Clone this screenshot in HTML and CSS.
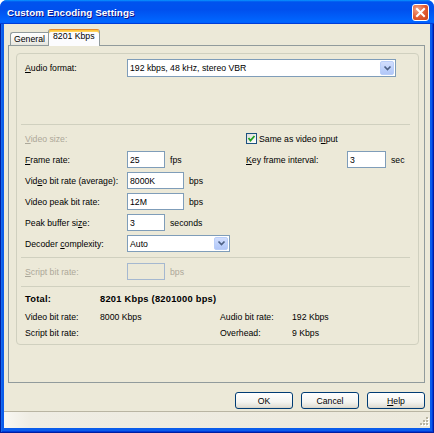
FILE: index.html
```html
<!DOCTYPE html>
<html>
<head>
<meta charset="utf-8">
<link rel="stylesheet" href="styles.css">
</head>
<body>
<div class="win">
  <div class="titlebar">
    <span class="title">Custom Encoding Settings</span>
    <span class="close"><svg width="15" height="15" viewBox="0 0 15 15"><path d="M4 4 L11 11 M11 4 L4 11" stroke="#fff" stroke-width="2" stroke-linecap="square"/></svg></span>
  </div>
  <div class="frame">
    <div class="client">
      <div class="tabs">
        <div class="tab">General</div>
        <div class="tab active">8201 Kbps</div>
      </div>
      <div class="panel">
        <div class="group">
          <div class="audio">
            <div class="arow">
              <span class="lbl"><u>A</u>udio format:</span>
              <div class="combo wide"><span>192 kbps, 48 kHz, stereo VBR</span><span class="dd"><svg width="11" height="11" viewBox="0 0 11 11"><path d="M2.5 3.5 L5.5 6.5 L8.5 3.5" fill="none" stroke="#4D6185" stroke-width="1.7"/></svg></span></div>
            </div>
          </div>
          <div class="sep"></div>
          <div class="video">
            <div class="vcol left">
              <div class="row"><span class="lbl dis"><u>V</u>ideo size:</span></div>
              <div class="row"><span class="lbl"><u>F</u>rame rate:</span><span class="tb s">25</span><span class="unit">fps</span></div>
              <div class="row"><span class="lbl">Vid<u>e</u>o bit rate (average):</span><span class="tb m">8000K</span><span class="unit">bps</span></div>
              <div class="row"><span class="lbl">Video peak bit rate:</span><span class="tb m">12M</span><span class="unit">bps</span></div>
              <div class="row"><span class="lbl">Peak buffer si<u>z</u>e:</span><span class="tb s">3</span><span class="unit">seconds</span></div>
              <div class="row"><span class="lbl">Decoder <u>c</u>omplexity:</span><div class="combo dec"><span>Auto</span><span class="dd"><svg width="11" height="11" viewBox="0 0 11 11"><path d="M2.5 3.5 L5.5 6.5 L8.5 3.5" fill="none" stroke="#4D6185" stroke-width="1.7"/></svg></span></div></div>
            </div>
            <div class="vcol right">
              <div class="row"><span class="cb"><svg width="9" height="9" viewBox="0 0 9 9"><path d="M1.5 4 L3.5 6.5 L7.5 2" fill="none" stroke="#21A121" stroke-width="1.8"/></svg></span><span class="cbl">Same as video i<u>n</u>put</span></div>
              <div class="row"><span class="lbl2"><u>K</u>ey frame interval:</span><span class="tb k">3</span><span class="unit">sec</span></div>
            </div>
          </div>
          <div class="sep"></div>
          <div class="script">
            <span class="lbl dis"><u>S</u>cript bit rate:</span><span class="tb s disabled"></span><span class="unit dis">bps</span>
          </div>
          <div class="sep"></div>
          <div class="totals">
            <div class="trow bold"><span class="c1">Total:</span><span>8201 Kbps (8201000 bps)</span></div>
            <div class="trow gap"><span class="c1">Video bit rate:</span><span class="c2">8000 Kbps</span><span class="c3">Audio bit rate:</span><span>192 Kbps</span></div>
            <div class="trow"><span class="c1">Script bit rate:</span><span class="c2"></span><span class="c3">Overhead:</span><span>9 Kbps</span></div>
          </div>
        </div>
      </div>
      <div class="buttons">
        <div class="btn">OK</div>
        <div class="btn">Cancel</div>
        <div class="btn"><span><u>H</u>elp</span></div>
      </div>
      <div class="status">
        <svg class="grip" width="10" height="10" viewBox="0 0 10 10">
          <rect x="8" y="1" width="2" height="2" fill="#fff"/><rect x="7" y="0" width="2" height="2" fill="#B8B4A2"/>
          <rect x="5" y="4" width="2" height="2" fill="#fff"/><rect x="4" y="3" width="2" height="2" fill="#B8B4A2"/>
          <rect x="8" y="4" width="2" height="2" fill="#fff"/><rect x="7" y="3" width="2" height="2" fill="#B8B4A2"/>
          <rect x="2" y="7" width="2" height="2" fill="#fff"/><rect x="1" y="6" width="2" height="2" fill="#B8B4A2"/>
          <rect x="5" y="7" width="2" height="2" fill="#fff"/><rect x="4" y="6" width="2" height="2" fill="#B8B4A2"/>
          <rect x="8" y="7" width="2" height="2" fill="#fff"/><rect x="7" y="6" width="2" height="2" fill="#B8B4A2"/>
        </svg>
      </div>
    </div>
  </div>
</div>
</body>
</html>
```
FILE: styles.css
```css
html, body {
  margin: 0;
  padding: 0;
  background: #ffffff;
}
body {
  font-family: "Liberation Sans", Arial, sans-serif;
  font-size: 8.7px;
  color: #000;
}
.win {
  width: 434px;
  height: 433px;
  display: flex;
  flex-direction: column;
  background: #0055EA;
  border-radius: 7px 7px 0 0;
  overflow: hidden;
}
.titlebar {
  height: 24px;
  flex: none;
  box-sizing: border-box;
  display: flex;
  align-items: center;
  justify-content: space-between;
  padding: 0 5px 0 7px;
  background: linear-gradient(180deg, #0997ff, #0053ee 8%, #0050ee 40%, #0066ff 88%, #0066ff 93%, #005bff 95%, #003dd7 96%, #003dd7);
}
.title {
  color: #fff;
  font-weight: bold;
  font-size: 9.8px;
  text-shadow: 1px 1px #0F1089;
  letter-spacing: 0.1px;
}
.close {
  box-sizing: border-box;
  width: 17px;
  height: 17px;
  border: 1px solid #fff;
  border-radius: 3px;
  background: radial-gradient(circle at 30% 30%, #F4A68A, #E0582E 55%, #C9431C);
  display: flex;
  align-items: center;
  justify-content: center;
  margin-top: 1px;
}
.frame {
  flex: 1;
  display: flex;
  padding: 0 4px 5px 4px;
  background: #0a5ceb;
  box-shadow: inset 1px 0 #001EA0, inset -1px 0 #001EA0, inset 0 -1px #001EA0, inset 2px 0 #166AEE, inset -2px 0 #003BDA, inset 0 -2px #003BDA;
}
.client {
  flex: 1;
  background: #ECE9D8;
  display: flex;
  flex-direction: column;
}
.tabs {
  display: flex;
  align-items: flex-end;
  height: 16px;
  margin-top: 5px;
  padding-left: 6px;
  flex: none;
}
.tab {
  box-sizing: border-box;
  height: 13px;
  width: 38px;
  border: 1px solid #919B9C;
  border-bottom: none;
  border-right: none;
  border-radius: 3px 0 0 0;
  background: linear-gradient(#FFFFFF, #F3F3EF 60%, #E6E5DE);
  padding-left: 3px;
  line-height: 12px;
}
.tab.active {
  height: 17px;
  width: 52px;
  margin-bottom: -1px;
  position: relative;
  z-index: 1;
  background: #FCFCFE;
  border: 1px solid #919B9C;
  border-top: 1px solid #E68B2C;
  border-bottom: none;
  border-radius: 3px 3px 0 0;
  box-shadow: inset 0 1px #FFC73C, inset 0 2px #FFD35C;
  padding-left: 4px;
  line-height: 13px;
}
.panel {
  box-sizing: border-box;
  margin-left: 4px;
  width: 417px;
  height: 338px;
  flex: none;
  border: 1px solid #919B9C;
  background: #ECE9D8;
  padding: 7px 0 0 7px;
}
.group {
  box-sizing: border-box;
  width: 403px;
  height: 292px;
  border: 1px solid #D0D0BF;
  border-radius: 4px;
  display: flex;
  flex-direction: column;
}
.audio {
  height: 70px;
  box-sizing: border-box;
  padding: 5px 0 0 8px;
  flex: none;
}
.arow {
  display: flex;
  align-items: center;
  height: 18px;
}
.lbl {
  width: 102px;
  flex: none;
}
.lbl2 {
  width: 101px;
  flex: none;
}
.dis {
  color: #ACA899;
}
.combo {
  box-sizing: border-box;
  height: 18px;
  border: 1px solid #7F9DB9;
  background: #fff;
  display: flex;
  align-items: center;
  justify-content: space-between;
  padding: 0 1px 0 2px;
  flex: none;
}
.combo.wide {
  width: 269px;
}
.combo.dec {
  width: 103px;
  height: 17px;
}
.dd {
  box-sizing: border-box;
  width: 14px;
  height: 14px;
  border: 1px solid #B9CEF9;
  border-radius: 2px;
  background: linear-gradient(#D2DEFD, #BCD0FB 60%, #B2C7F8);
  display: flex;
  align-items: center;
  justify-content: center;
}
.combo.dec .dd {
  height: 13px;
}
.sep {
  height: 1px;
  flex: none;
  background: #D0D0BF;
  margin: 0 8px 0 4px;
}
.video {
  display: flex;
  box-sizing: border-box;
  height: 132px;
  padding: 3px 0 3px 8px;
  flex: none;
}
.vcol.left {
  width: 221px;
}
.row {
  height: 21px;
  display: flex;
  align-items: center;
}
.tb {
  box-sizing: border-box;
  height: 17px;
  border: 1px solid #7F9DB9;
  background: #fff;
  padding-left: 2px;
  display: flex;
  align-items: center;
  flex: none;
}
.tb.s { width: 38px; }
.tb.m { width: 57px; }
.tb.k { width: 39px; }
.tb.disabled {
  background: #ECE9D8;
  border-color: #A5B8D0;
}
.unit {
  margin-left: 5px;
}
.cb {
  box-sizing: border-box;
  width: 11px;
  height: 11px;
  border: 1px solid #1C5180;
  background: linear-gradient(135deg, #DCDCD7, #FFFFFF);
  display: flex;
  align-items: center;
  justify-content: center;
  flex: none;
}
.cbl {
  margin-left: 2px;
}
.script {
  height: 28px;
  box-sizing: border-box;
  padding: 5px 0 6px 8px;
  display: flex;
  align-items: center;
  flex: none;
}
.totals {
  padding: 4px 0 0 8px;
  flex: none;
}
.trow {
  display: flex;
  height: 16px;
  align-items: center;
}
.trow.gap {
  margin-top: 2px;
}
.trow.bold {
  font-weight: bold;
  font-size: 9.3px;
  letter-spacing: 0.25px;
}
.c1 { width: 75px; flex: none; }
.c2 { width: 120px; flex: none; }
.c3 { width: 72px; flex: none; }
.buttons {
  display: flex;
  justify-content: flex-end;
  gap: 8px;
  margin-top: 9px;
  padding-right: 5px;
  flex: none;
}
.btn {
  box-sizing: border-box;
  width: 58px;
  height: 17px;
  border: 1px solid #003C74;
  border-radius: 3px;
  background: linear-gradient(#FFFFFF, #F4F4F0 60%, #E3E1D8 90%, #D6D0C5);
  display: flex;
  align-items: center;
  justify-content: center;
}
.status {
  margin-top: 2px;
  height: 17px;
  box-sizing: border-box;
  border-top: 1px solid #B9B5A3;
  background: linear-gradient(90deg, #F8F7F2, #EFEDE4 6%, #ECE9DC);
  display: flex;
  justify-content: flex-end;
  align-items: flex-end;
  flex: none;
}
.grip {
  margin: 0 1px 1px 0;
}
```
